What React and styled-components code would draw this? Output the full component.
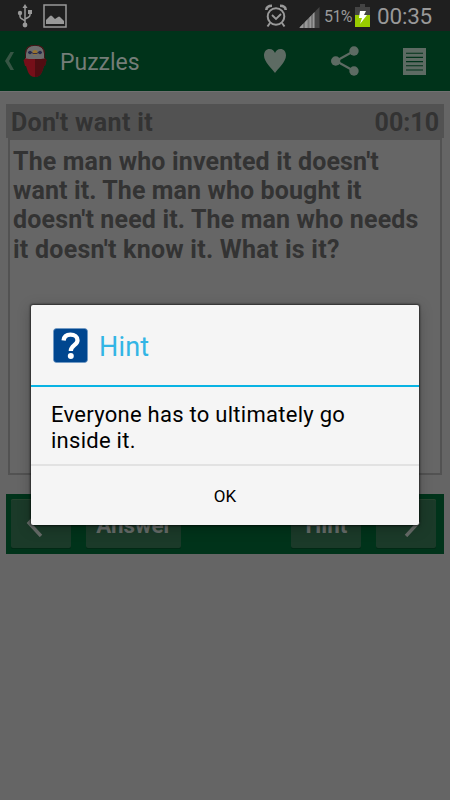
import styled, { createGlobalStyle } from "styled-components";

const GlobalStyle = createGlobalStyle`
  * {
    box-sizing: border-box;
  }
  body {
    margin: 0;
    background: #656565;
    font-family: Roboto, sans-serif;
  }
`;

const Screen = styled.div`
  position: relative;
  width: 450px;
  height: 800px;
  overflow: hidden;
  background: #656565;
`;

const StatusBar = styled.div`
  display: flex;
  justify-content: space-between;
  height: 31px;
  padding: 0 17px 0 17px;
  background: #1f1f1f;
  color: #999;
`;

const StatusGroup = styled.div`
  display: flex;
  align-items: center;
  gap: ${(props) => props.$gap || 0}px;
`;

const SignalSlot = styled.div`
  margin: 3px 4px 0 12px;
  line-height: 0;
`;

const Percent = styled.span`
  width: 31px;
  padding-top: 1px;
  font-size: 16px;
  letter-spacing: -0.6px;
  white-space: nowrap;
`;

const Clock = styled.span`
  width: 56px;
  margin-left: 7px;
  font-size: 22.5px;
  letter-spacing: -0.2px;
  white-space: nowrap;
`;

const ActionBar = styled.header`
  display: flex;
  align-items: center;
  height: 60px;
  padding: 0 24px 0 4px;
  background: #00331a;
  color: #5d6b63;
`;

const AppTitle = styled.h1`
  flex: 1;
  margin: 2px 0 0 13px;
  color: #747d78;
  font-size: 23px;
  font-weight: 400;
`;

const Actions = styled.div`
  display: flex;
  align-items: center;
  gap: 44.5px;
`;

const Content = styled.main`
  padding: 13px 6px 0;
  box-shadow: inset 0 1px #707070;
`;

const PuzzleHeader = styled.div`
  display: flex;
  justify-content: space-between;
  height: 34px;
  padding: 4px 5px 0;
  background: #525252;
  color: #333;
  font-size: 25px;
  font-weight: 700;
  line-height: 30px;
`;

const HeaderText = styled.span`
  letter-spacing: ${(props) => props.$spacing}px;
`;

const PuzzleBody = styled.div`
  height: 337px;
  margin: 0 2px;
  padding: 6.5px 3px;
  border: 2px solid #525252;
  background: #666;
  color: #333;
  font-size: 25px;
  font-weight: 700;
  line-height: 29.4px;
  white-space: nowrap;
`;

const Line = styled.div`
  letter-spacing: ${(props) => props.$spacing || 0}px;
`;

const Controls = styled.div`
  display: flex;
  height: 60px;
  margin-top: 19px;
  padding: 5px 7px 5px 5px;
  background: #00331a;
`;

const ControlButton = styled.button`
  display: flex;
  align-items: center;
  justify-content: center;
  width: ${(props) => props.$width}px;
  height: 49px;
  margin: 0 ${(props) => props.$gap || 0}px 0 0;
  padding: 2px 0 0 1px;
  border: 0;
  border-radius: 2px;
  background: #1b3a29;
  box-shadow: inset 0 1px #27432f, 0 1px #022915;
  color: #666b68;
  font-family: inherit;
  font-size: 22.4px;
  font-weight: 700;
`;

const PreviousButton = styled(ControlButton)`
  padding: 0 12px 1px 0;
`;

const NextButton = styled(ControlButton)`
  padding: 0 0 1px 12px;
`;

const Dialog = styled.section`
  position: absolute;
  top: 305px;
  left: 31px;
  width: 388px;
  height: 220px;
  border-radius: 2px;
  background: #f5f5f5;
  box-shadow: 0 0 2px 1px rgba(0, 0, 0, 0.55), 0 3px 14px rgba(0, 0, 0, 0.25);
`;

const DialogHeader = styled.div`
  display: flex;
  align-items: center;
  height: 82px;
  padding-left: 22px;
  border-bottom: 2px solid #08b3e3;
`;

const DialogTitle = styled.h2`
  margin: 3px 0 0 11px;
  color: #33b5e5;
  font-size: 27px;
  font-weight: 400;
  letter-spacing: 0.2px;
`;

const Message = styled.div`
  height: 79px;
  padding: 15px 20px 0;
  border-bottom: 2px solid #e2e2e2;
  color: #000;
  font-size: 22px;
  line-height: 26px;
  white-space: nowrap;
`;

const OkButton = styled.button`
  display: block;
  width: 100%;
  height: 59px;
  padding: 1px 0 0;
  border: 0;
  background: transparent;
  color: #000;
  font-family: inherit;
  font-size: 17px;
`;

function UsbIcon() {
  return (
    <svg width="16" height="24" viewBox="0 0 16 24" fill="none" stroke="#999" strokeWidth="1.5">
      <path d="M8 3v17M3 10v2.5q0 1.5 2 2.5l3 2M13 9v2q0 1.5-2 2.5l-3 1.5" />
      <path d="M8 0l2.5 4h-5z" fill="#999" stroke="none" />
      <circle cx="3" cy="9" r="2.2" fill="#999" stroke="none" />
      <path d="M11 6h4v4h-4z" fill="#999" stroke="none" />
      <circle cx="8" cy="21" r="2.4" fill="#999" stroke="none" />
    </svg>
  );
}

function PictureIcon() {
  return (
    <svg width="24" height="24" viewBox="0 0 24 24">
      <path d="M1 1h22v22H1z" fill="none" stroke="#999" strokeWidth="1.5" />
      <path d="M3 20v-4l4-4q1-1 2 0l3 3 3-2q1-1 2 0l4 4v3z" fill="#999" />
    </svg>
  );
}

function AlarmIcon() {
  return (
    <svg width="22" height="24" viewBox="0 0 22 24" fill="none" stroke="#999" strokeWidth="2">
      <circle cx="11" cy="12.5" r="8.3" />
      <path d="M7 11l4 4 5-5" strokeWidth="1.8" />
      <path d="M1.3 6Q1.5 1.7 7 1.7M20.7 6Q20.5 1.7 15 1.7" strokeWidth="2.6" />
      <path d="M5 19l-2.5 3.5M17 19l2.5 3.5" />
    </svg>
  );
}

function SignalIcon() {
  return (
    <svg width="21" height="21" viewBox="0 0 21 21">
      <path d="M0 21L15.5 5v16z" fill="#777" />
      <path d="M1 21v-1l3-3v4zM6 21v-6l2.5-2.5V21zM10.5 21V10.5L12 9v12zM14 21V7l1.5-2v16z" fill="#999" />
      <path d="M16 21V4.5L20.5 0v21z" fill="#444" />
    </svg>
  );
}

function BatteryIcon() {
  return (
    <svg width="15" height="23" viewBox="0 0 15 23">
      <path d="M5 0h5v3h5v20H0V3h5z" fill="#444" />
      <path d="M0 11h15v12H0z" fill="#99cc00" />
      <path d="M5 7h6l-2 4h3L5 20l2-6H4z" fill="#fff" />
    </svg>
  );
}

function UpIcon() {
  return (
    <svg width="11" height="20" viewBox="0 0 11 20">
      <path d="M6.5 1H10L5 10l5 9H6.5L1 10z" fill="#365544" />
    </svg>
  );
}

const LogoSlot = styled.div`
  margin-left: 8px;
  line-height: 0;
`;

function HeadLogo() {
  return (
    <svg width="24" height="34" viewBox="0 0 24 34">
      <path d="M2 10Q2 1 12 1t10 9v5l1.5 1-1.5 6h-1l-2 6q-2 5-7 5t-7-5l-2-6H2L.5 16 2 15z" fill="#760f19" />
      <path d="M12 14h10l1.5 2-1.5 6h-1l-2 6q-2 5-7 5z" fill="#500d12" />
      <path d="M2.5 14.5V10Q3 1.5 12 1.5T21.5 10v4.5Q19 14.5 18 15H6q-1-.5-3.5-.5z" fill="#6d6d6d" />
      <path d="M2.5 14V10Q3 1.3 12 1.3T21.5 10v4" fill="none" stroke="#3b1718" />
      <path d="M5 8.5h14" stroke="#272b4d" />
      <circle cx="7" cy="8.5" r="1.8" fill="#272b4d" />
      <circle cx="17" cy="8.5" r="1.8" fill="#272b4d" />
      <circle cx="12" cy="8.5" r="2.5" fill="#987330" />
      <path d="M9.5 9.5h5" stroke="#343047" />
    </svg>
  );
}

function HeartIcon() {
  return (
    <svg width="22" height="24" viewBox="0 0 22 24">
      <path
        d="M11 24C8 19.5 0 13 0 6.5 0 2.7 2.2 0 5.5 0 8.5 0 10.2 1.8 11 4 11.8 1.8 13.5 0 16.5 0 19.8 0 22 2.7 22 6.5 22 13 14 19.5 11 24z"
        fill="currentColor"
      />
    </svg>
  );
}

function ShareIcon() {
  return (
    <svg width="28" height="30" viewBox="0 0 28 30" fill="currentColor">
      <path d="M23 5L5 15l18 10" fill="none" stroke="currentColor" strokeWidth="2.2" />
      <circle cx="23" cy="5" r="4.7" />
      <circle cx="4.7" cy="15" r="4.7" />
      <circle cx="23" cy="25" r="4.7" />
    </svg>
  );
}

function ListIcon() {
  return (
    <svg width="23" height="27" viewBox="0 0 23 27">
      <path d="M0 0h23v27H0z" fill="currentColor" />
      <path d="M3 5.2h17M3 9.4h17M3 13.6h17M3 17.8h17M3 22h17" stroke="#00331a" strokeWidth="1.1" />
    </svg>
  );
}

function HintIcon() {
  return (
    <svg width="35" height="35" viewBox="0 0 35 35">
      <rect x=".5" y=".5" width="34" height="34" rx="3" fill="#00468f" stroke="#6e9ac4" strokeWidth=".7" />
      <path
        d="M10.6 12.5C11 8.3 13.5 6.7 17.5 6.7c4.2 0 7 2.2 7 5.5 0 5-6.7 5-6.7 10.8"
        fill="none"
        stroke="#fff"
        strokeWidth="4.3"
      />
      <circle cx="17.8" cy="27.9" r="3" fill="#fff" />
    </svg>
  );
}

function Arrow({ next }) {
  return (
    <svg width="18" height="28" viewBox="0 0 18 28" fill="none" stroke="currentColor" strokeWidth="3.4">
      <path d={next ? "M3 1l12 13L3 27" : "M15 1L3 14l12 13"} />
    </svg>
  );
}

export default function App() {
  return (
    <>
      <GlobalStyle />
      <Screen>
        <StatusBar>
          <StatusGroup $gap={10}>
            <UsbIcon />
            <PictureIcon />
          </StatusGroup>
          <StatusGroup>
            <AlarmIcon />
            <SignalSlot>
              <SignalIcon />
            </SignalSlot>
            <Percent>51%</Percent>
            <BatteryIcon />
            <Clock>00:35</Clock>
          </StatusGroup>
        </StatusBar>
        <ActionBar>
          <UpIcon />
          <LogoSlot>
            <HeadLogo />
          </LogoSlot>
          <AppTitle>Puzzles</AppTitle>
          <Actions>
            <HeartIcon />
            <ShareIcon />
            <ListIcon />
          </Actions>
        </ActionBar>
        <Content>
          <PuzzleHeader>
            <HeaderText $spacing={0.35}>Don't want it</HeaderText>
            <HeaderText $spacing={0}>00:10</HeaderText>
          </PuzzleHeader>
          <PuzzleBody>
            <Line $spacing={0.15}>The man who invented it doesn't</Line>
            <Line $spacing={0.1}>want it. The man who bought it</Line>
            <Line $spacing={0.15}>doesn't need it. The man who needs</Line>
            <Line $spacing={0.24}>it doesn't know it. What is it?</Line>
          </PuzzleBody>
          <Controls>
            <PreviousButton $width={60} $gap={15}>
              <Arrow />
            </PreviousButton>
            <ControlButton $width={95} $gap={110}>
              Answer
            </ControlButton>
            <ControlButton $width={70} $gap={15}>
              Hint
            </ControlButton>
            <NextButton $width={60}>
              <Arrow next />
            </NextButton>
          </Controls>
        </Content>
        <Dialog>
          <DialogHeader>
            <HintIcon />
            <DialogTitle>Hint</DialogTitle>
          </DialogHeader>
          <Message>
            <Line $spacing={0.27}>Everyone has to ultimately go</Line>
            <Line $spacing={0.27}>inside it.</Line>
          </Message>
          <OkButton>OK</OkButton>
        </Dialog>
      </Screen>
    </>
  );
}
